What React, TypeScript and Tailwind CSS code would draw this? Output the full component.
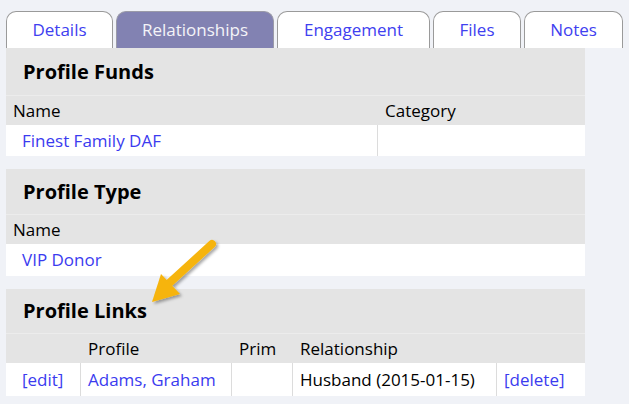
import React from 'react';

const tabs = [
    { label: 'Details', w: 'w-[107px]' },
    { label: 'Relationships', w: 'w-[158px]', active: true },
    { label: 'Engagement', w: 'w-[153px]' },
    { label: 'Files', w: 'w-[88px]' },
    { label: 'Notes', w: 'w-[99px]' },
];

function Heading({ title, h }: { title: string; h: string }) {
    return (
        <div className={`${h} flex items-center pl-[17px] text-[20px] font-bold text-black`}>
            {title}
        </div>
    );
}

export default function App() {
    return (
        <div
            className="w-[629px] h-[404px] bg-[#f0f2f7] overflow-hidden text-[17px]"
            style={{ fontFamily: '"Open Sans", "Noto Sans", sans-serif' }}
        >
            {/* tabs */}
            <div className="flex gap-[3px] pl-[6px] pt-[11px]">
                {tabs.map((t) => (
                    <div
                        key={t.label}
                        className={
                            t.active
                                ? `${t.w} h-[37px] flex items-center justify-center rounded-t-[10px] border border-b-0 border-[#9a9aa8] bg-[#8282b2] text-[#f4f4f8]`
                                : `${t.w} h-[37px] flex items-center justify-center rounded-t-[10px] border border-b-0 border-[#9a9a9a] bg-white text-[#4040f0]`
                        }
                    >
                        {t.label}
                    </div>
                ))}
            </div>

            <div className="relative w-[579px] ml-[6px]">
                {/* Profile Funds */}
                <section className="bg-[#e4e4e4]">
                    <Heading title="Profile Funds" h="h-[47px]" />
                    <div className="flex h-[30px] items-center border-t border-[#ececec]">
                        <div className="w-[372px] pl-[7px]">Name</div>
                        <div className="pl-[7px]">Category</div>
                    </div>
                    <div className="flex h-[31px] items-center bg-white">
                        <div className="w-[372px] h-full flex items-center pl-[16px] text-[#3b3bef] border-r border-[#dcdcdc]">
                            Finest Family DAF
                        </div>
                        <div />
                    </div>
                </section>

                {/* Profile Type */}
                <section className="bg-[#e4e4e4] mt-[13px]">
                    <Heading title="Profile Type" h="h-[45px]" />
                    <div className="flex h-[30px] items-center border-t border-[#ececec] pl-[7px]">Name</div>
                    <div className="flex h-[32px] items-center bg-white pl-[16px] text-[#3b3bef]">VIP Donor</div>
                </section>

                {/* Profile Links */}
                <section className="bg-[#e4e4e4] mt-[13px]">
                    <Heading title="Profile Links" h="h-[44px]" />
                    <div className="flex h-[30px] items-center border-t border-[#ececec]">
                        <div className="w-[75px]" />
                        <div className="w-[151px] pl-[7px]">Profile</div>
                        <div className="w-[61px] pl-[7px]">Prim</div>
                        <div className="w-[204px] pl-[7px]">Relationship</div>
                        <div />
                    </div>
                    <div className="flex h-[33px] items-stretch bg-white">
                        <div className="w-[75px] flex items-center pl-[16px] text-[#3b3bef] border-r border-[#dcdcdc]">[edit]</div>
                        <div className="w-[151px] flex items-center pl-[7px] text-[#3b3bef] border-r border-[#dcdcdc]">Adams, Graham</div>
                        <div className="w-[61px] border-r border-[#dcdcdc]" />
                        <div className="w-[204px] flex items-center pl-[7px] border-r border-[#dcdcdc]">Husband (2015-01-15)</div>
                        <div className="flex items-center pl-[7px] text-[#3b3bef]">[delete]</div>
                    </div>
                </section>

                {/* arrow callout */}
                <svg
                    className="absolute left-[138px] top-[186px] pointer-events-none"
                    width="84"
                    height="76"
                    viewBox="0 0 84 76"
                >
                    <defs>
                        <filter id="sh" x="-30%" y="-30%" width="160%" height="160%">
                            <feDropShadow dx="2" dy="2" stdDeviation="1.5" floodColor="#000" floodOpacity="0.35" />
                        </filter>
                    </defs>
                    <g filter="url(#sh)">
                        <line x1="68" y1="10" x2="22" y2="52" stroke="#f6b40a" strokeWidth="8" strokeLinecap="round" />
                        <polygon points="8,68 17,40 36,60" fill="#f6b40a" />
                    </g>
                </svg>
            </div>
        </div>
    );
}
